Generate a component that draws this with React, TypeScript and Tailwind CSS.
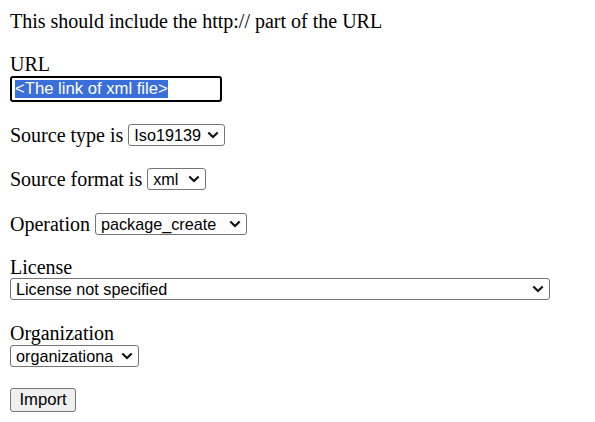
import React from "react"

const Chevron = () => (
  <svg width="12" height="8" viewBox="0 0 12 8" className="ml-[5px] shrink-0">
    <polyline points="1.3,1.5 6,6 10.7,1.5" fill="none" stroke="#111" strokeWidth="2.2" />
  </svg>
)

const FakeSelect = ({ value, className }: { value: string; className: string }) => (
  <div
    className={`flex h-[22px] items-center justify-between rounded-[3px] border border-[#767676] bg-white pl-[5px] pr-[5px] font-['Liberation_Sans',Arial,sans-serif] text-[16.2px] leading-[20px] text-black ${className}`}
  >
    <span className="min-w-0 overflow-hidden whitespace-nowrap">{value}</span>
    <Chevron />
  </div>
)

export default function App() {
  return (
    <div className="flex min-h-[422px] flex-col items-start bg-white pl-[10px] pt-[10px] font-['Liberation_Serif','Times_New_Roman',serif] text-[20px] leading-[22px] text-black">
      <div className="h-[22px]">This should include the http:// part of the URL</div>

      <div className="mt-[21px] h-[22px]">URL</div>
      <div className="mt-[1px] flex h-[26px] w-[212px] items-center rounded-[3px] border-2 border-black bg-white pl-[3px] font-['Liberation_Sans',Arial,sans-serif] text-[16.67px] leading-[18px]">
        <span className="bg-[#3a6ed8] text-white">&lt;The link of xml file&gt;</span>
      </div>

      <div className="mt-[22px] flex h-[22px] items-center gap-[5px]">
        <span>Source type is</span>
        <FakeSelect value="Iso19139" className="w-[97px]" />
      </div>

      <div className="mt-[22px] flex h-[22px] items-center gap-[5px]">
        <span>Source format is</span>
        <FakeSelect value="xml" className="w-[59px]" />
      </div>

      <div className="mt-[23px] flex h-[22px] items-center gap-[5px]">
        <span>Operation</span>
        <FakeSelect value="package_create" className="w-[152px]" />
      </div>

      <div className="mt-[21px] h-[22px]">License</div>
      <FakeSelect value="License not specified" className="w-[540px]" />

      <div className="mt-[22px] h-[22px]">Organization</div>
      <FakeSelect value="organizationa" className="mt-[1px] w-[129px]" />

      <button className="mt-[21px] flex h-[24px] w-[66px] items-center justify-center rounded-[3px] border border-[#767676] bg-[#efefef] font-['Liberation_Sans',Arial,sans-serif] text-[16.67px] leading-[18px] text-black">
        Import
      </button>
    </div>
  )
}
